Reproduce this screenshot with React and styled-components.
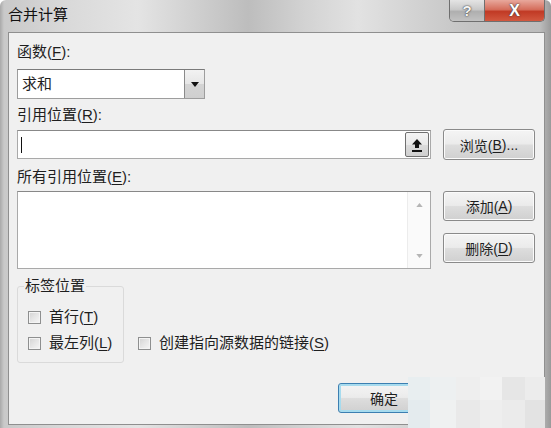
import React from "react";
import styled, { createGlobalStyle } from "styled-components";

const GlobalStyle = createGlobalStyle`
    body
    {
        margin: 0;
        background: #fff;
        font-family: "Liberation Sans", "Noto Sans CJK SC", sans-serif;
    }
`;

const Window = styled.div`
    position: relative;
    width: 551px;
    height: 428px;
    display: flex;
    flex-direction: column;
    overflow: hidden;
    border-radius: 6px 6px 0 0;
    background: linear-gradient(90deg, #a9a9a9 0px, #c9c9c9 4px, #d9d9d9 12%, #e4e4e4 25%, #bdbdbd 45%, #d2d2d2 55%, #e2e2e2 65%, #c4c4c4 85%, #bcbcbc 98%, #9a9a9a 100%);
`;

const TitleBar = styled.div`
    height: 32px;
    flex: none;
    display: flex;
    align-items: flex-start;
    padding-left: 8px;
`;

const Title = styled.div`
    margin-top: 6px;
    font-size: 15px;
    line-height: 18px;
    color: #111;
`;

const CaptionButtons = styled.div`
    margin-left: auto;
    margin-right: 6px;
    display: flex;
    height: 21px;
    border: 1px solid #6f6f6f;
    border-top: none;
    border-radius: 0 0 5px 5px;
    overflow: hidden;
`;

const CaptionButton = styled.div`
    width: ${p => p.$close ? 59 : 34}px;
    display: flex;
    align-items: center;
    justify-content: center;
    color: ${p => p.$close ? "#fff" : "#f4f4f4"};
    font-family: "Liberation Sans", sans-serif;
    font-weight: bold;
    font-size: ${p => p.$close ? 16 : 15}px;
    text-shadow: 0 0 2px #444, 0 0 1px #444;
    background: ${p => p.$close
        ? "linear-gradient(180deg, #e8a89c 0%, #d56e5c 45%, #c13a25 55%, #d2583f 100%)"
        : "linear-gradient(180deg, #e4e4e4 0%, #c9c9c9 45%, #afafaf 55%, #c2c2c2 100%)"};
    border-left: ${p => p.$close ? "1px solid #6f6f6f" : "none"};
`;

const Client = styled.div`
    flex: 1;
    margin: 0 6px 3px 8px;
    border: 1px solid #8f8f8f;
    background: #f0f0f0;
    padding: 9px 9px 0 8px;
    display: flex;
    flex-direction: column;
    color: #1e1e1e;
    font-size: 15px;
`;

const Label = styled.div`
    height: 20px;
    line-height: 20px;
    margin-top: ${p => p.$mt || 0}px;
    white-space: nowrap;
`;

const Key = styled.span`
    text-decoration: underline;
    text-underline-offset: 2px;
`;

const Row = styled.div`
    display: flex;
    align-items: ${p => p.$align || "center"};
    gap: 12px;
    margin-top: ${p => p.$mt || 0}px;
`;

const Select = styled.div`
    width: 188px;
    height: 30px;
    box-sizing: border-box;
    border: 1px solid #9d9d9d;
    border-top-color: #7a7a7a;
    background: #fff;
    display: flex;
    align-items: center;
`;

const SelectText = styled.div`
    flex: 1;
    padding-left: 4px;
    line-height: 20px;
`;

const DropButton = styled.div`
    width: 19px;
    height: 28px;
    border-left: 1px solid #8a8a8a;
    background: linear-gradient(180deg, #f2f2f2 0%, #e6e6e6 50%, #d4d4d4 51%, #cfcfcf 100%);
    display: flex;
    align-items: center;
    justify-content: center;
`;

const InputBox = styled.div`
    width: 414px;
    height: 29px;
    box-sizing: border-box;
    border: 1px solid #a9a9a9;
    border-top-color: #888;
    background: #fff;
    display: flex;
    align-items: center;
    padding-left: 3px;
`;

const Caret = styled.div`
    width: 1px;
    height: 16px;
    background: #111;
`;

const CollapseButton = styled.div`
    margin-left: auto;
    margin-right: 1px;
    width: 24px;
    height: 25px;
    box-sizing: border-box;
    border: 1px solid #707070;
    border-radius: 2px;
    background: linear-gradient(180deg, #f4f4f4 0%, #e9e9e9 50%, #dcdcdc 51%, #d0d0d0 100%);
    display: flex;
    align-items: center;
    justify-content: center;
`;

const Button = styled.div`
    width: 92px;
    height: ${p => p.$h || 30}px;
    box-sizing: border-box;
    border: 1px solid ${p => p.$default ? "#3c7fb1" : "#8a8a8a"};
    border-radius: 3px;
    background: linear-gradient(180deg, #f4f4f4 0%, #ebebeb 48%, #dddddd 52%, #d0d0d0 100%);
    box-shadow: ${p => p.$default ? "inset 0 0 0 2px #a7dbee" : "inset 0 0 0 1px #fbfbfb"};
    display: flex;
    align-items: center;
    justify-content: center;
    font-size: 14px;
    color: #1e1e1e;
`;

const ListBox = styled.div`
    width: 414px;
    height: 78px;
    box-sizing: border-box;
    border: 1px solid #a9a9a9;
    border-top-color: #888;
    background: #fff;
    display: flex;
    justify-content: flex-end;
`;

const ScrollBar = styled.div`
    width: 22px;
    border-left: 1px solid #ececec;
    background: #fafafa;
    display: flex;
    flex-direction: column;
    justify-content: space-between;
    align-items: center;
    padding: 11px 0 10px;
`;

const SideButtons = styled.div`
    display: flex;
    flex-direction: column;
    gap: 12px;
`;

const Bottom = styled.div`
    display: flex;
    align-items: flex-end;
    margin-top: 7px;
`;

const Group = styled.fieldset`
    margin: 0;
    width: 107px;
    height: 87px;
    box-sizing: border-box;
    border: 1px solid #dadada;
    border-radius: 3px;
    padding: 11px 0 0 10px;
    display: flex;
    flex-direction: column;
    gap: 6px;
`;

const Legend = styled.legend`
    margin-left: -4px;
    padding: 0 1px;
    line-height: 20px;
    font-size: 15px;
    color: #1e1e1e;
`;

const Check = styled.label`
    display: flex;
    align-items: center;
    gap: 8px;
    height: 20px;
    line-height: 20px;
    white-space: nowrap;
    margin: ${p => p.$m || 0};
`;

const CheckText = styled.span`
    white-space: nowrap;
`;

const Box = styled.span`
    width: 13px;
    height: 13px;
    box-sizing: border-box;
    border: 1px solid #8e8f8f;
    background: linear-gradient(135deg, #d2d2d2 0%, #e6e6e6 50%, #f6f6f6 100%);
    box-shadow: inset 0 0 0 1px #f4f4f4;
`;

const Footer = styled.div`
    margin-top: 20px;
    display: flex;
    justify-content: flex-end;
    gap: 13px;
`;

const Mosaic = styled.div`
    position: absolute;
    left: 408px;
    top: 377px;
    width: 137px;
    height: 51px;
    display: grid;
    grid-template-columns: 22px 26px 24px 22px 23px 20px;
    grid-template-rows: 23px 28px;
`;

const Tile = styled.div`
    background: ${p => p.$c};
`;

const tiles = [
    "#e8eef0", "#edf0f1", "#eeeeee", "#f2f2f2", "#e6e6e6", "#ececec",
    "#e4ebee", "#eff1f1", "#e9e9e9", "#eeeeee", "#ebebeb", "#e3e3e3"
];

const DownTri = ({ color = "#111", w = 8, h = 5 }) => (
    <svg width={w} height={h} viewBox="0 0 8 5">
        <polygon points="0,0 8,0 4,5" fill={color} />
    </svg>
);

const UpTri = ({ color = "#111", w = 8, h = 5 }) => (
    <svg width={w} height={h} viewBox="0 0 8 5">
        <polygon points="0,5 8,5 4,0" fill={color} />
    </svg>
);

const CollapseIcon = () => (
    <svg width="12" height="14" viewBox="0 0 12 14">
        <polygon points="6,1 11,6.5 8,6.5 8,10 4,10 4,6.5 1,6.5" fill="#111" />
        <rect x="1" y="12" width="10" height="2" fill="#111" />
    </svg>
);

export default class App extends React.Component {
    render() {
        return (
            <Window>
                <GlobalStyle />
                <TitleBar>
                    <Title>合并计算</Title>
                    <CaptionButtons>
                        <CaptionButton>?</CaptionButton>
                        <CaptionButton $close>X</CaptionButton>
                    </CaptionButtons>
                </TitleBar>
                <Client>
                    <Label>函数(<Key>F</Key>):</Label>
                    <Row $mt={7}>
                        <Select>
                            <SelectText>求和</SelectText>
                            <DropButton><DownTri w={8} h={5} /></DropButton>
                        </Select>
                    </Row>
                    <Label $mt={6}>引用位置(<Key>R</Key>):</Label>
                    <Row $mt={4}>
                        <InputBox>
                            <Caret />
                            <CollapseButton><CollapseIcon /></CollapseButton>
                        </InputBox>
                        <Button $h={31}>浏览(<Key>B</Key>)...</Button>
                    </Row>
                    <Label $mt={7}>所有引用位置(<Key>E</Key>):</Label>
                    <Row $mt={4} $align="flex-start">
                        <ListBox>
                            <ScrollBar>
                                <UpTri color="#b5b5b5" w={7} h={4} />
                                <DownTri color="#b5b5b5" w={7} h={4} />
                            </ScrollBar>
                        </ListBox>
                        <SideButtons>
                            <Button>添加(<Key>A</Key>)</Button>
                            <Button>删除(<Key>D</Key>)</Button>
                        </SideButtons>
                    </Row>
                    <Bottom>
                        <Group>
                            <Legend>标签位置</Legend>
                            <Check><Box /><CheckText>首行(<Key>T</Key>)</CheckText></Check>
                            <Check><Box /><CheckText>最左列(<Key>L</Key>)</CheckText></Check>
                        </Group>
                        <Check $m="0 0 10px 14px"><Box /><CheckText>创建指向源数据的链接(<Key>S</Key>)</CheckText></Check>
                    </Bottom>
                    <Footer>
                        <Button $default>确定</Button>
                        <Button>取消</Button>
                    </Footer>
                </Client>
                <Mosaic>
                    {tiles.map((c, i) => <Tile key={i} $c={c} />)}
                </Mosaic>
            </Window>
        );
    }
}
